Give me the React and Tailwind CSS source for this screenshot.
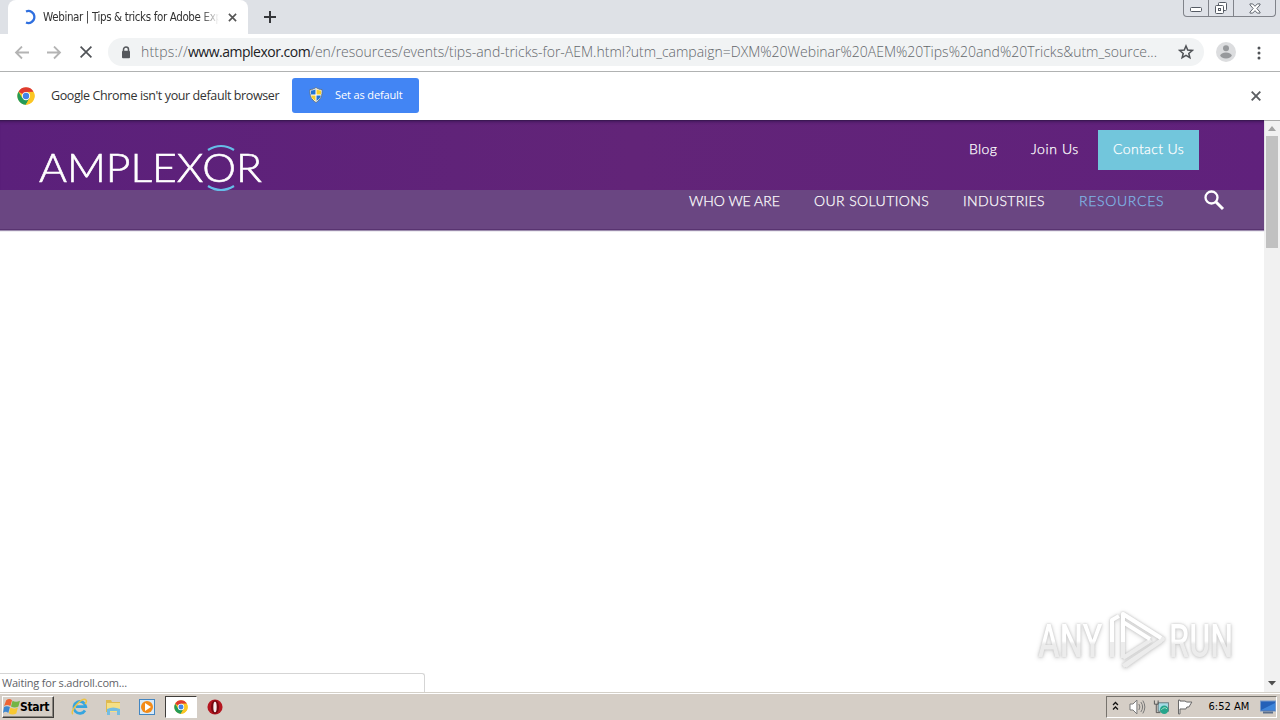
import React from 'react';

const ui = "font-['DejaVu_Sans_Condensed','DejaVu_Sans',sans-serif]";
const light = "font-['Open_Sans','Noto_Sans',sans-serif]";

function ChromeLogo({ className }) {
  return (
    <svg viewBox="0 0 48 48" className={className}>
      <circle cx="24" cy="24" r="23" fill="#fbc624" />
      <path d="M24 24 4 12.5A23 23 0 0 1 44 12.5L24 13Z" fill="#df3b30" />
      <path d="M4 12.5A23 23 0 0 0 23.5 47L34 29.5 24 24 14 29.5Z" fill="#249b58" />
      <path d="M24 13H44.2A23 23 0 0 1 23.5 47L33.5 29.5Z" fill="#fbc624" />
      <circle cx="24" cy="24" r="11" fill="#fff" />
      <circle cx="24" cy="24" r="8.5" fill="#4285e8" />
    </svg>
  );
}

function TabStrip() {
  return (
    <div className="flex h-[34px] items-start bg-[#dee1e6]">
      <div className="ml-2 flex h-[34px] w-60 items-center rounded-t-lg bg-white pl-[13px]">
        <svg viewBox="0 0 16 16" className="h-4 w-4 shrink-0" fill="none" stroke="#2f6fdf" strokeWidth="2.2">
          <path d="M5 2.500A6 6 0 1 1 5 13.500" />
        </svg>
        <span className={`${ui} ml-1.5 w-[176px] shrink-0 pt-px whitespace-nowrap text-[11.5px] tracking-[-0.37px] text-[#333] [mask-image:linear-gradient(to_right,black_90%,transparent)]`}>
          Webinar | Tips &amp; tricks for Adobe Exp
        </span>
        <svg viewBox="0 0 10 10" className="ml-[9px] h-[9px] w-[9px] shrink-0" stroke="#555" strokeWidth="1.8">
          <path d="M1 1l8 8M9 1l-8 8" />
        </svg>
      </div>
      <svg viewBox="0 0 12 12" className="mt-[11px] ml-4 h-3 w-3" stroke="#35363a" strokeWidth="2">
        <path d="M6 0v12M0 6h12" />
      </svg>
      <div className="mr-1 ml-auto flex h-[17px] w-[93px] rounded-b-[4px] border border-t-0 border-[#80838a] bg-[#dfe2e8]">
        <div className="flex w-[25px] items-center justify-center border-r border-[#80838a]">
          <svg viewBox="0 0 13 6" className="mt-1 h-[6px] w-[13px]" fill="#fff" stroke="#555b64">
            <rect x=".5" y=".5" width="11" height="4" rx="1" />
          </svg>
        </div>
        <div className="flex w-[25px] items-center justify-center border-r border-[#80838a]">
          <svg viewBox="0 0 14 14" className="h-[14px] w-[14px]" fill="#fff" stroke="#555b64">
            <rect x="4.500" y="1.500" width="8" height="8" rx="1" />
            <rect x="1.500" y="4.500" width="8" height="8" rx="1" />
            <rect x="4.500" y="7.500" width="2" height="2" />
          </svg>
        </div>
        <div className="flex flex-1 items-center justify-center">
          <svg viewBox="0 0 13 12" className="h-[11px] w-3" fill="#fff" stroke="#555b64">
            <path d="M1 1h3l2.500 2.600L9 1h3v1L8.500 6l3.500 4v1H9L6.500 8.400 4 11H1v-1l3.500-4L1 2z" />
          </svg>
        </div>
      </div>
    </div>
  );
}

function Toolbar() {
  return (
    <div className="flex h-[38px] items-center border-b border-[#b0b2b2] bg-white">
      <svg viewBox="0 0 16 14" className="ml-[14px] h-[14px] w-4" fill="none" stroke="#b4b4b4" strokeWidth="1.800">
        <path d="M15 6.500H2M8 .5l-6 6 6 6" />
      </svg>
      <svg viewBox="0 0 16 14" className="ml-4 h-[14px] w-4" fill="none" stroke="#b4b4b4" strokeWidth="1.800">
        <path d="M1 6.500h13M8 .5l6 6-6 6" />
      </svg>
      <svg viewBox="0 0 12 12" className="mb-px ml-[18px] h-3 w-3" stroke="#505357" strokeWidth="1.700">
        <path d="M.6.6l10.800 10.800M11.400.6L.6 11.400" />
      </svg>
      <div className="mb-px ml-4 flex h-7 w-[1096px] items-center rounded-full bg-[#f1f3f4] pl-[13px]">
        <svg viewBox="0 0 10 13" className="h-[13px] w-[10px] shrink-0">
          <path d="M2.500 5V3.500a2.500 2.500 0 0 1 5 0V5" fill="none" stroke="#55585c" strokeWidth="1.500" />
          <rect x="1" y="4.800" width="8" height="7.500" rx="1" fill="#55585c" />
        </svg>
        <div className={`${light} ml-[10px] w-[1016px] shrink-0 whitespace-nowrap text-[14px] leading-7 font-light text-[#63676b]`}>
          <span className="tracking-[0.2px]">https://</span>
          <span className="font-normal tracking-[-0.5px] text-[#202124]">www.amplexor.com</span>
          <span className="tracking-[0.003px]">/en/resources/events/tips-and-tricks-for-AEM.html?utm_campaign=DXM%20Webinar%20AEM%20Tips%20and%20Tricks&amp;utm_source...</span>
        </div>
        <svg viewBox="0 0 24 24" className="ml-[21px] h-4 w-4 shrink-0" fill="none" stroke="#505357" strokeWidth="2.300">
          <path d="M12 3l2.600 6.100 6.700.6-5.100 4.400 1.600 6.500-5.800-3.500-5.800 3.500 1.600-6.500-5.100-4.400 6.700-.6z" />
        </svg>
      </div>
      <svg viewBox="0 0 20 20" className="mb-px ml-3 h-5 w-5">
        <circle cx="10" cy="10" r="10" fill="#dcdddf" />
        <circle cx="10" cy="6.200" r="3" fill="#97999c" />
        <ellipse cx="10" cy="13.500" rx="5.700" ry="2.900" fill="#97999c" />
      </svg>
      <svg viewBox="0 0 4 14" className="ml-[21px] h-[14px] w-1" fill="#505357">
        <circle cx="2" cy="2" r="1.500" /><circle cx="2" cy="7" r="1.500" /><circle cx="2" cy="12" r="1.500" />
      </svg>
    </div>
  );
}

function InfoBar() {
  return (
    <div className="flex h-12 items-center bg-white">
      <ChromeLogo className="ml-[17px] h-[18px] w-[18px]" />
      <span className={`${light} ml-4 w-[229px] whitespace-nowrap text-[12.5px] tracking-[-0.39px] text-[#333]`}>Google Chrome isn't your default browser</span>
      <button className="mb-[2px] ml-3 flex h-[35px] w-[127px] items-center rounded-[3px] bg-[#4285f4] pl-[17px]">
        <svg viewBox="0 0 14 16" className="h-4 w-[14px]">
          <path d="M7 .5C5 2 3 2.500 1 2.500c-.5 6 1 10 6 13 5-3 6.500-7 6-13C11 2.500 9 2 7 .5" fill="#fff" stroke="#657684" />
          <path d="M6.500 2.200C5 3 3.500 3.500 2 3.500V7.500h4.500zM7.500 8.500v5.400c2.500-1.600 4-3.200 4.400-5.400z" fill="#2374d2" />
          <path d="M7.500 2.200c1.500.8 3 1.300 4.500 1.300v4H7.500zM6.500 8.500v5.400C4 12.300 2.500 10.700 2.100 8.500z" fill="#f5ce2c" />
        </svg>
        <span className={`${light} ml-3 whitespace-nowrap text-[11px] tracking-[-0.13px] text-white`}>Set as default</span>
      </button>
      <svg viewBox="0 0 10 10" className="mr-[19px] ml-auto h-[10px] w-[10px]" stroke="#5b5e62" strokeWidth="1.900">
        <path d="M.7.7l8.600 8.600M9.300.7L.7 9.300" />
      </svg>
    </div>
  );
}

const nav = "font-['Lato',sans-serif] whitespace-nowrap text-[14px] leading-5 font-light [-webkit-text-stroke:0.25px]";

function SiteHeader() {
  return (
    <header className="relative flex h-[110px] flex-col border-t border-[#3b1853] text-white shadow-[0_1px_1px_#9c8cad]">
      <div className="flex h-[69px] items-start bg-linear-to-r from-[#5b207b] via-[#622478] to-[#60217c] shadow-[inset_0_3px_3px_-2px_#42185c]">
        <span className="ml-auto flex items-start pt-[9px]">
          <span className={`${nav} w-[62px] pt-[9px] tracking-[0.4px]`}>Blog</span>
          <span className={`${nav} w-[67px] pt-[9px] tracking-[0.6px]`}>Join Us</span>
          <span className={`${nav} mr-[65px] h-10 w-[101px] bg-[#72c6dc] pt-[9px] pl-[15px] tracking-[0.38px]`}>Contact Us</span>
        </span>
      </div>
      <div className="flex h-10 items-start justify-end border-b border-[#583370] bg-[#6a4682]">
        <span className={`${nav} w-[125px] pt-px`}>WHO WE ARE</span>
        <span className={`${nav} w-[149px] pt-px tracking-[0.4px]`}>OUR SOLUTIONS</span>
        <span className={`${nav} w-[116px] pt-px tracking-[0.35px]`}>INDUSTRIES</span>
        <span className={`${nav} w-[124px] pt-px tracking-[0.7px] text-[#80b7e5]`}>RESOURCES</span>
        <svg viewBox="0 0 22 22" className="mr-[39px] h-[22px] w-[22px]" fill="none" stroke="#fff">
          <circle cx="8.500" cy="7.500" r="6" strokeWidth="2.300" />
          <path d="M13 12l7 7" strokeWidth="3" />
        </svg>
      </div>
      <div className="absolute top-[23px] left-[39px] h-[48px] w-[224px]">
        <span className="inline-block origin-left scale-x-[1.095] font-['Lato',sans-serif] text-[39px] leading-[46px] font-light whitespace-nowrap [-webkit-text-stroke:0.6px]">AMPLEXOR</span>
        <svg viewBox="0 0 30 48" className="absolute top-0 left-[167px] h-12 w-[30px]" fill="none" stroke="#66bde8" strokeWidth="2.200">
          <path d="M2 6Q15-2 28 6M2 42q13 8 26 0" />
        </svg>
      </div>
    </header>
  );
}

function ScrollBar() {
  return (
    <div className="flex w-4 flex-col items-center bg-[#f1f1f1] shadow-[inset_0_1px_#aaa]">
      <svg viewBox="0 0 16 16" className="h-4 w-4"><path d="M4 11h8L8 6z" fill="#a3a3a3" /></svg>
      <div className="h-[112px] w-3 bg-[#c1c1c1]" />
      <svg viewBox="0 0 16 16" className="mt-auto h-4 w-4"><path d="M4 5h8L8 9.500z" fill="#4f4f4f" /></svg>
    </div>
  );
}

function Watermark() {
  const word = "inline-block origin-left bg-linear-to-b from-white from-50% to-[#ececec] to-55% bg-clip-text font-['Roboto',sans-serif] text-[46px] leading-[62px] font-medium whitespace-nowrap text-transparent";
  return (
    <div className="absolute top-[490px] left-[1038px] flex h-[62px] w-[198px] [filter:drop-shadow(0_0_1px_#c4c4c4)_drop-shadow(0_1px_2px_#d8d8d8)]">
      <span className="block w-[71px]"><span className={`${word} scale-x-[0.71]`}>ANY</span></span>
      <svg viewBox="0 0 58 62" className="h-[62px] w-[58px] shrink-0 overflow-visible" fill="none" strokeWidth="4" strokeLinejoin="round">
        <path d="M14 48V4l40 25-38 27M14 56l38-25M14 48l28-18" stroke="#ececec" />
        <path d="M14 46V4l38 24M14 12l27 17M3 47V10l7-4" stroke="#fff" />
        <path d="M3 32v15M14 32v14" stroke="#ececec" />
      </svg>
      <span className="ml-[2px] block"><span className={`${word} scale-x-[0.7]`}>RUN</span></span>
    </div>
  );
}

function Taskbar() {
  return (
    <div className="flex h-7 items-center border-t border-[#d4d0c8] bg-[#d5cec6] shadow-[inset_0_1px_0_#fff]">
      <div className={`${ui} ml-0.5 flex h-[22px] w-[52px] items-center border border-t-white border-r-[#403e3b] border-b-[#403e3b] border-l-white text-[12px] font-bold tracking-[-0.35px] text-black shadow-[inset_-1px_-1px_#8a8680]`}>
        <svg viewBox="0 0 16 16" className="h-[17px] w-[17px] shrink-0">
          <path d="M3 2q3-2 5.500 0L7 7.500q-3-2-6 0z" fill="#ee6434" />
          <path d="M9 2.500q3 2 7 0L14.500 8q-3.500 2-7 0z" fill="#73b544" />
          <path d="M1 8.500q2.500-1.500 5.500 0L5 14q-2.500-2-5 0z" fill="#3b87d1" />
          <path d="M7 9q3.500 2 7 0l-1.500 5.500q-3.500 2-7 0z" fill="#f8c832" />
        </svg>
        Start
      </div>
      <svg viewBox="0 0 18 18" className="ml-4 h-[18px] w-[18px]" fill="none">
        <path d="M15 12.500a6 6 0 1 1 .8-3.800H6" stroke="#36a5df" strokeWidth="2.700" />
        <path d="M3 16C-1 14 12-2 16 2c1 1 0 3-1 4" stroke="#edc444" strokeWidth="1.500" />
      </svg>
      <svg viewBox="0 0 18 18" className="ml-4 h-[18px] w-[18px]">
        <path d="M2 2h5l1 2h8v10H2z" fill="#dfba50" /><path d="M3 5h13v9H3z" fill="#f5df85" />
        <path d="M3 17v-6q6-3 13 0v6h-3v-4H6v4z" fill="#74bde2" />
      </svg>
      <svg viewBox="0 0 18 18" className="ml-4 h-[18px] w-[18px]">
        <rect x="1.500" y="1.500" width="15" height="15" fill="#d7eafa" stroke="#4386c1" /><circle cx="9" cy="9" r="6" fill="#f38b18" /><path d="M7 5l6 4-6 4z" fill="#fff" />
      </svg>
      <div className="ml-[9px] flex h-[22px] w-8 items-center justify-center border border-t-[#403e3b] border-r-white border-b-white border-l-[#403e3b] bg-white">
        <ChromeLogo className="h-[14px] w-[14px]" />
      </div>
      <svg viewBox="0 0 18 18" className="ml-[10px] h-4 w-4">
        <circle cx="9" cy="9" r="8.500" fill="#b51620" /><ellipse cx="9" cy="9" rx="4.500" ry="7.500" fill="#750810" /><ellipse cx="9" cy="9" rx="1.900" ry="6" fill="#f7eeee" />
      </svg>
      <div className={`${ui} mr-[3px] ml-auto flex h-[22px] w-[171px] items-center border border-t-[#77736d] border-r-white border-b-white border-l-[#77736d] text-[11px] text-black`}>
        <svg viewBox="0 0 7 10" className="mb-0.5 ml-[5px] h-[10px] w-[7px]" fill="none" stroke="#111" strokeWidth="1.300"><path d="M1 4l2.500-2.500L6 4M1 8.500L3.500 6 6 8.500" /></svg>
        <svg viewBox="0 0 17 16" className="ml-[10px] h-4 w-[17px]" fill="#fff" stroke="#777"><path d="M1 5h3l4-4v14l-4-4H1z" /><path d="M10 5q2 3 0 6M12 3q3.500 5 0 10M14 1.500q4 6.500 0 13" fill="none" /></svg>
        <svg viewBox="0 0 18 16" className="ml-[7px] h-4 w-[17px]">
          <rect x="5.500" y="3.500" width="11" height="9" fill="#a4dbe4" stroke="#65777c" /><path d="M1.500 1v4h4V1M3.500 5v9H8" fill="none" stroke="#525252" /><circle cx="12" cy="11" r="4.500" fill="#26a58b" /><path d="M9 11q3-4 6-1" stroke="#b3e1cb" fill="none" />
        </svg>
        <svg viewBox="0 0 17 16" className="ml-[7px] h-4 w-[17px]" fill="#fff" stroke="#666"><path d="M1.500 1v14H3v-5h6l1-2h2l3-5h-5l-2-1H3V1z" /></svg>
        <span className="mt-0.5 ml-[15px] w-[43px] whitespace-nowrap tracking-[0.05px]">6:52 AM</span>
        <svg viewBox="0 0 16 14" className="ml-[9px] h-[14px] w-4 shrink-0"><rect x=".5" y="1" width="15" height="10" fill="#2461b8" stroke="#7699c9" /><path d="M1 10L15 3v7z" fill="#3e85da" /><path d="M3 12.500h10" stroke="#5b6f8b" strokeWidth="2" /></svg>
      </div>
    </div>
  );
}

export default function App() {
  return (
    <div className="flex h-[720px] w-[1280px] flex-col overflow-hidden bg-white">
      <TabStrip />
      <Toolbar />
      <InfoBar />
      <main className="relative flex h-[572px]">
        <div className="flex-1"><SiteHeader /></div>
        <ScrollBar />
        <Watermark />
        <div className={`${light} absolute bottom-0 left-0 flex h-[19px] w-[425px] items-center rounded-tr-[3px] border-t border-r border-[#d5d5d5] bg-white pl-0.5 text-[11px] tracking-[-0.2px] text-[#5f6368]`}>Waiting for s.adroll.com...</div>
      </main>
      <Taskbar />
    </div>
  );
}
